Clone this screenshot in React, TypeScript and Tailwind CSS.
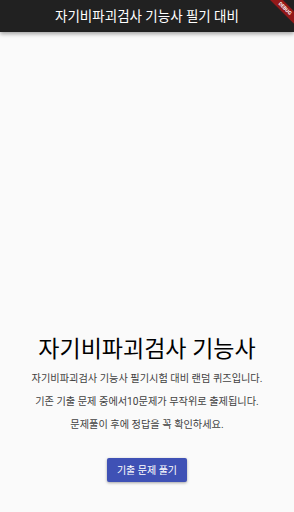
export default function App() {
  const lines = [
    "자기비파괴검사 기능사 필기시험 대비 랜덤 퀴즈입니다.",
    "기존 기출 문제 중에서10문제가 무작위로 출제됩니다.",
    "문제풀이 후에 정답을 꼭 확인하세요.",
  ];

  return (
    <div
      className="relative flex h-[512px] w-[294px] flex-col overflow-hidden bg-[#fafafa]"
      style={{ fontFamily: "Roboto, 'Noto Sans CJK KR', sans-serif" }}
    >
      <header className="z-10 flex h-8 shrink-0 items-center justify-center bg-[#212121] shadow-[0_2px_4px_rgba(0,0,0,0.35)]">
        <h1 className="text-[13.5px] text-white">자기비파괴검사 기능사 필기 대비</h1>
      </header>

      {/* debug ribbon */}
      <div className="absolute right-[-19px] top-[4px] z-20 w-[56px] rotate-45 bg-[#a01818]/90 text-center text-[5px] font-bold leading-[9px] text-white">
        DEBUG
      </div>

      <main className="flex flex-1 flex-col items-center justify-end pb-[30px]">
        <h2 className="text-[23px] leading-[30px] text-black">자기비파괴검사 기능사</h2>
        <div className="mt-[8px] flex flex-col items-center gap-[11px]">
          {lines.map((l) => (
            <p key={l} className="text-[10.2px] leading-[12px] text-[#424242]">
              {l}
            </p>
          ))}
        </div>
        <button className="mt-[27px] h-6 rounded-[2px] bg-[#3f51b5] px-[10px] text-[10px] text-white shadow-[0_1px_3px_rgba(0,0,0,0.35)]">
          기출 문제 풀기
        </button>
      </main>
    </div>
  );
}
